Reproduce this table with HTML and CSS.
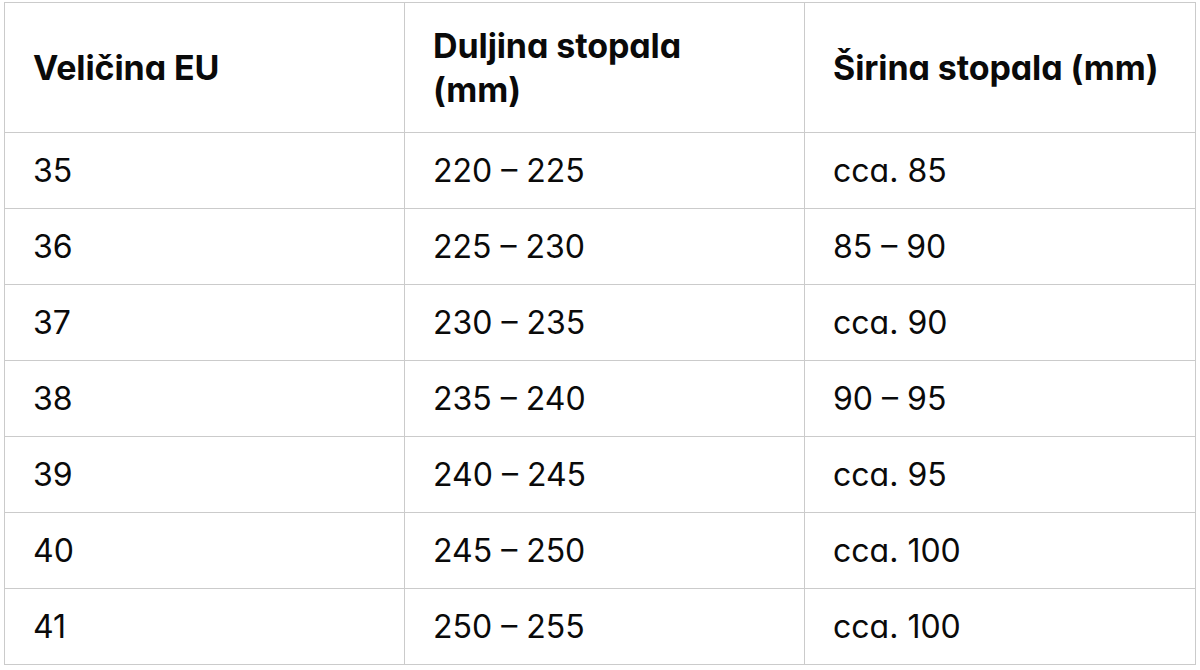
FILE: index.html
```html
<!DOCTYPE html>
<html lang="hr">
<head>
<meta charset="utf-8">
<title>Tablica veličina</title>
<link rel="stylesheet" href="styles.css">
</head>
<body>
<div class="wrap">
<table class="sizes">
<colgroup>
<col class="c1"><col class="c2"><col class="c3">
</colgroup>
<thead>
<tr><th>Veličina EU</th><th class="wrap-head">Duljina stopala (mm)</th><th>Širina stopala (mm)</th></tr>
</thead>
<tbody>
<tr><td>35</td><td>220 – 225</td><td>cca. 85</td></tr>
<tr><td>36</td><td>225 – 230</td><td>85 – 90</td></tr>
<tr><td>37</td><td>230 – 235</td><td>cca. 90</td></tr>
<tr><td>38</td><td>235 – 240</td><td>90 – 95</td></tr>
<tr><td>39</td><td>240 – 245</td><td>cca. 95</td></tr>
<tr><td>40</td><td>245 – 250</td><td>cca. 100</td></tr>
<tr><td>41</td><td>250 – 255</td><td>cca. 100</td></tr>
</tbody>
</table>
</div>
</body>
</html>
```
FILE: styles.css
```css
html, body {
  margin: 0;
  padding: 0;
  background: #ffffff;
}
.wrap {
  padding: 2px 0 0 4px;
}
.sizes {
  border-collapse: collapse;
  table-layout: fixed;
  width: 1191px;
  font-family: Inter, "Liberation Sans", sans-serif;
  font-feature-settings: "cv11" 1;
  color: #0a0a0a;
}
.c1 { width: 400px; }
.c2 { width: 400px; }
.c3 { width: 391px; }
.sizes th,
.sizes td {
  border: 1.5px solid #cbcbcb;
  text-align: left;
  vertical-align: middle;
  padding: 0 12px 0 28px;
}
.sizes th {
  height: 129px;
  font-size: 34px;
  font-weight: 700;
  line-height: 44px;
  letter-spacing: -0.1px;
}
.sizes th.wrap-head {
  padding-right: 48px;
}
.sizes td {
  height: 75px;
  font-size: 32px;
  font-weight: 400;
  line-height: 40px;
}
```
